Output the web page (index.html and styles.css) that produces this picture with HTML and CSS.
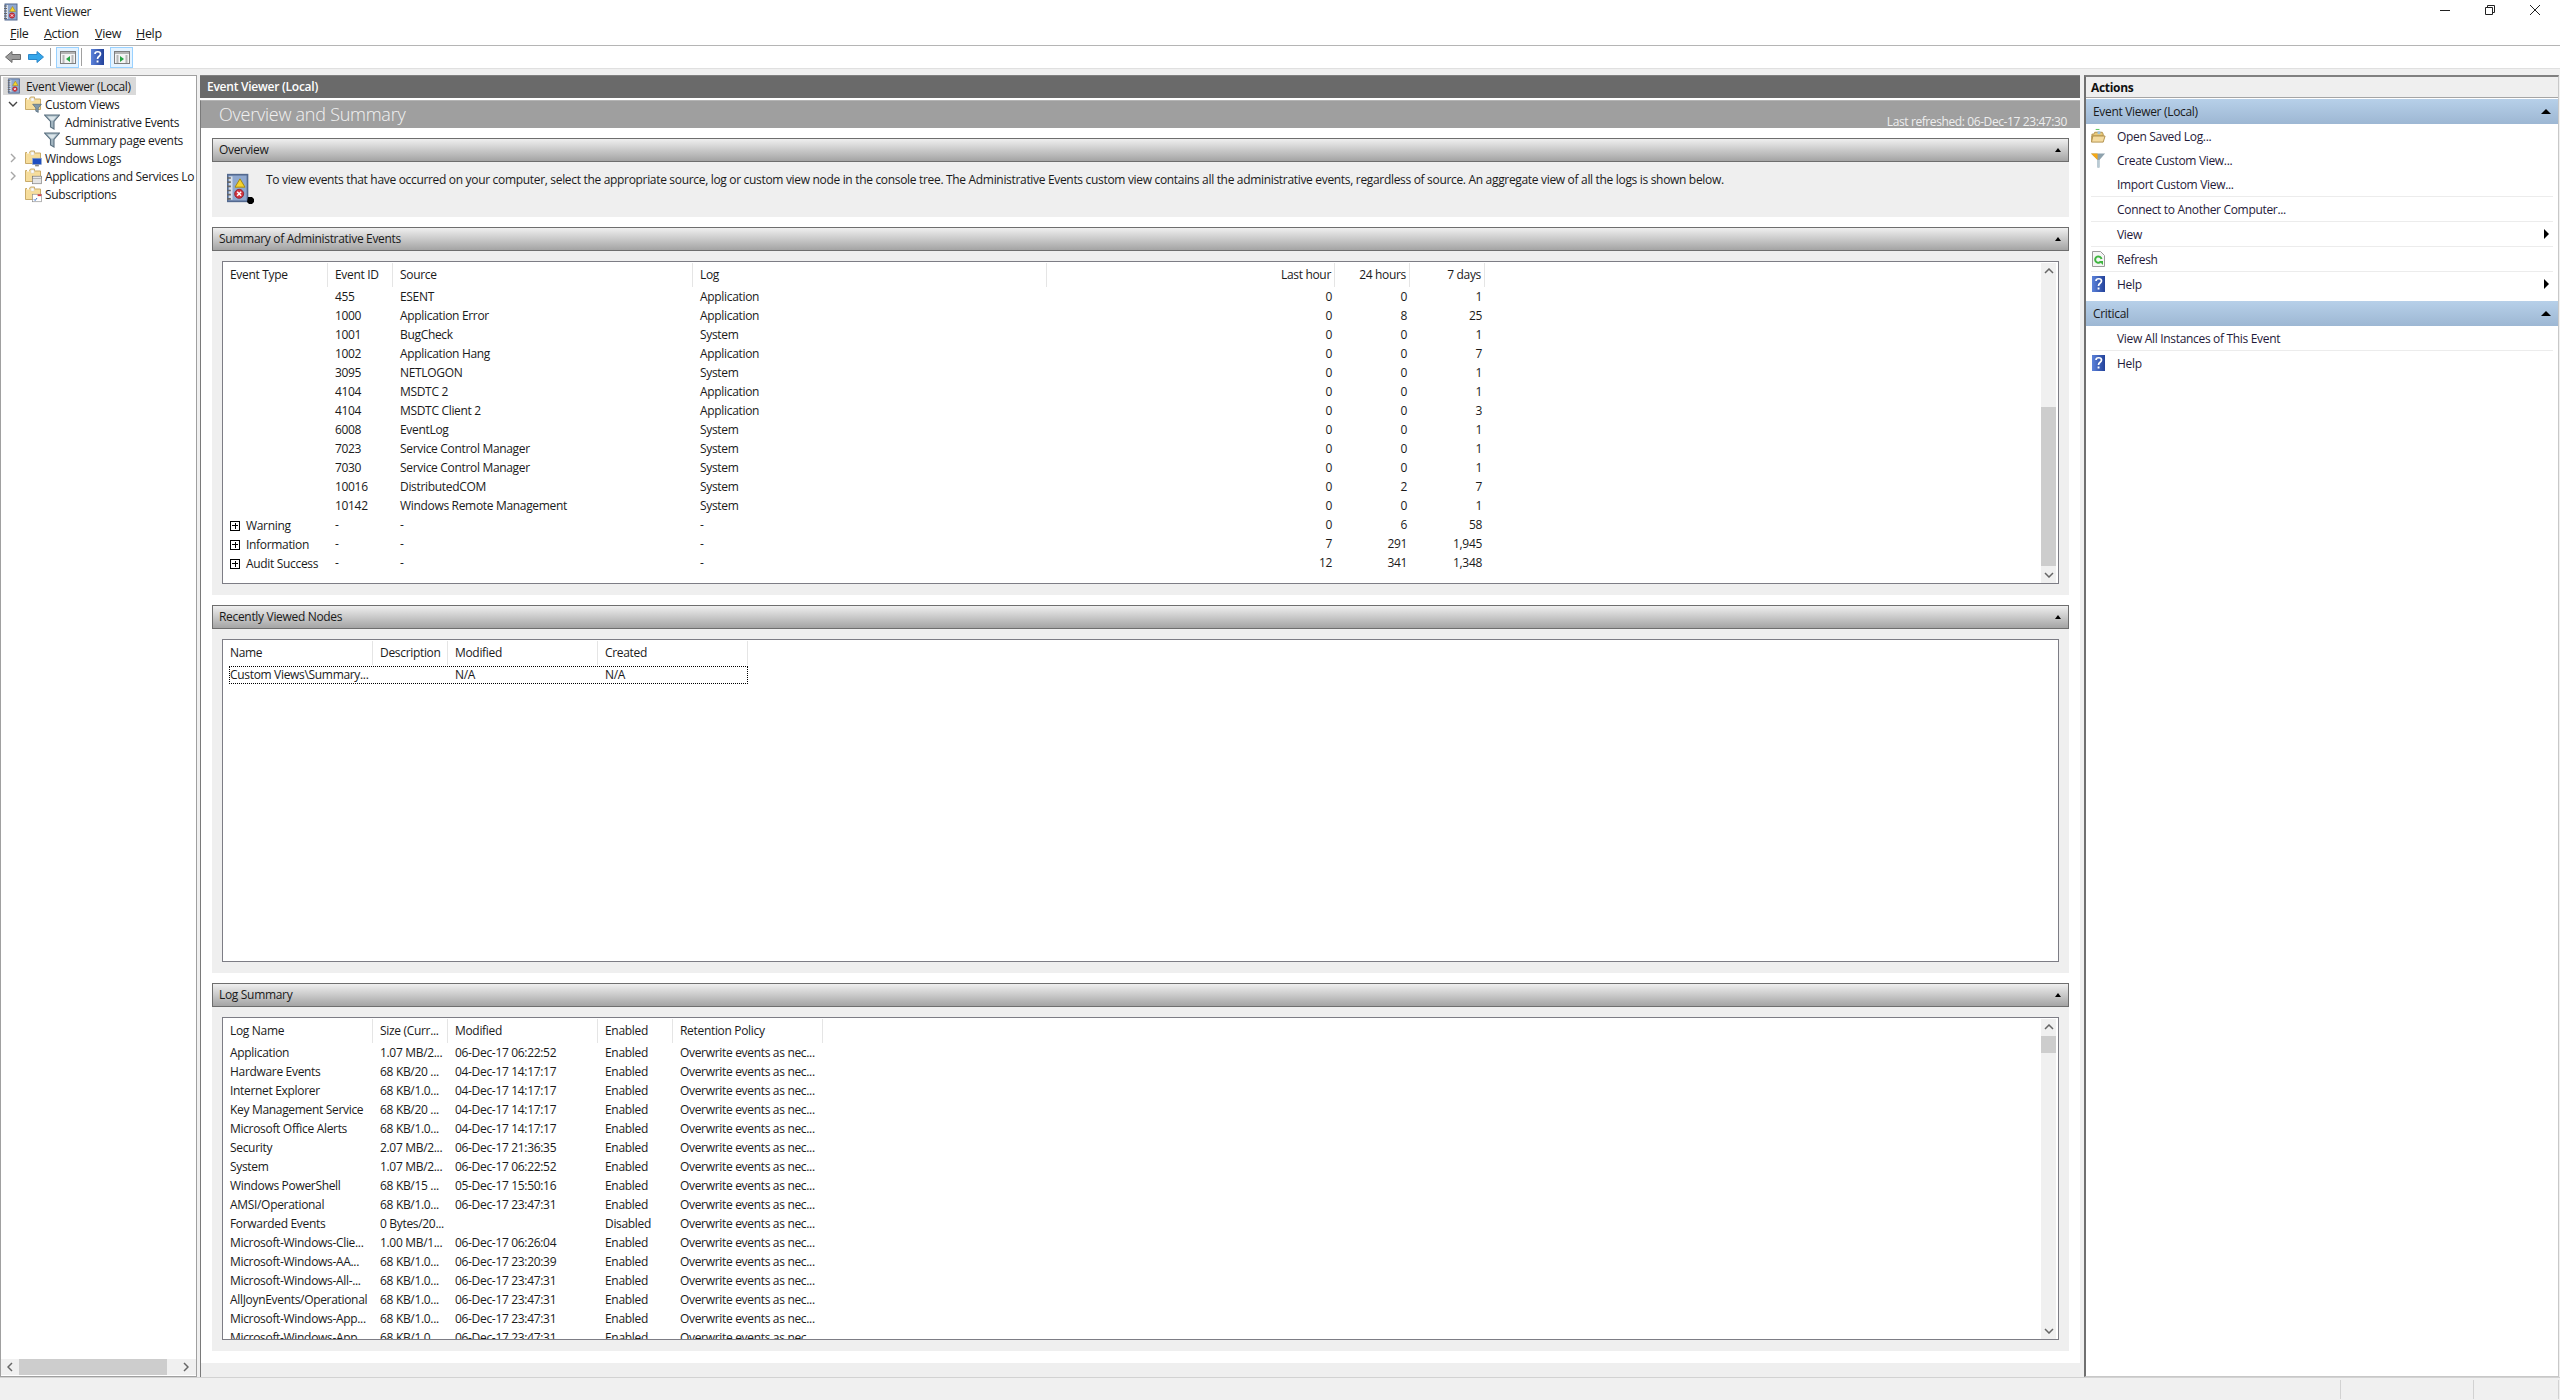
FILE: index.html
```html
<!DOCTYPE html>
<html lang="en">
<head>
    <meta charset="UTF-8">
    <title>Event Viewer</title>
    <link rel="stylesheet" href="styles.css">
</head>
<body>
    <svg class="defs" width="0" height="0">
        <defs>
            <linearGradient id="g-help" x1="0" x2="1" y1="0" y2="0">
                <stop offset="0" stop-color="#5c82da"/>
                <stop offset="1" stop-color="#23429a"/>
            </linearGradient>
            <symbol id="i-log" viewBox="0 0 16 18">
                <rect x="2" y="1" width="12" height="16" fill="#8fa8cf" stroke="#53698f"/>
                <rect x="3" y="2" width="2" height="14" fill="#d8dfe9"/>
                <path d="M1 3h3M1 5.500h3M1 8h3M1 10.500h3M1 13h3M1 15.500h3" stroke="#666" stroke-width="1"/>
                <path d="M9.500 3.500l3 5h-6z" fill="#f6d32d" stroke="#a58a16" stroke-width=".6"/>
                <circle cx="9" cy="12.500" r="2.700" fill="#d2333f" stroke="#8c1d27" stroke-width=".5"/>
                <path d="M7.800 11.300l2.400 2.400M10.200 11.300l-2.400 2.400" stroke="#fff" stroke-width=".9"/>
            </symbol>
            <symbol id="i-folder" viewBox="0 0 16 16">
                <path d="M.5 13.500V2.500h4l1-1.500h4v2h6v10.500z" fill="#f6dd9c" stroke="#c9ab6a"/>
                <rect x="2" y="2" width="2" height="1.500" fill="#fff"/>
                <rect x="6" y="2" width="3" height="3" fill="#fff" stroke="#cfcfcf" stroke-width=".5"/>
            </symbol>
            <symbol id="i-funnel" viewBox="0 0 16 16">
                <path d="M.5 1h15L10 7.500V15L6.500 13V7.500z" fill="#a3b6c1" stroke="#5b7080" stroke-width="1.100"/>
                <path d="M3.500 2.500h9L9 6.500H7z" fill="#dbe5ea"/>
            </symbol>
            <symbol id="i-help" viewBox="0 0 13 16">
                <rect width="13" height="16" fill="url(#g-help)"/>
                <path d="M4 5c0-3 5.500-3 5.500 0 0 2.500-3 2-3 5" fill="none" stroke="#fff" stroke-width="1.700"/>
                <rect x="5.600" y="11.500" width="1.900" height="2" fill="#fff"/>
            </symbol>
            <symbol id="i-panel" viewBox="0 0 16 13">
                <rect x=".5" y=".5" width="15" height="12" fill="#f4f4f4" stroke="#7d7d7d"/>
                <rect x="1" y="1" width="14" height="2" fill="#b4b4b4"/>
                <path d="M2.500 5h2M2.500 7h2M2.500 9h2M2.500 11h2M11.500 5h2M11.500 7h2M11.500 9h2M11.500 11h2" stroke="#7a7a7a"/>
            </symbol>
        </defs>
    </svg>

    <div class="titlebar">
        <svg class="title-icon"><use href="#i-log"/></svg>
        <span class="title-text">Event Viewer</span>
        <div class="win-controls">
            <svg class="win-btn" viewBox="0 0 10 10"><path d="M0 5.500h10" stroke="#222" fill="none"/></svg>
            <svg class="win-btn" viewBox="0 0 10 10"><path d="M.5 2.500h7v7h-7zM2.500 2.500v-2h7v7h-2" stroke="#222" fill="none"/></svg>
            <svg class="win-btn" viewBox="0 0 10 10"><path d="M0 0l10 10M10 0L0 10" stroke="#222" fill="none"/></svg>
        </div>
    </div>

    <div class="menubar">
        <span class="menu-item menu-file"><u>F</u>ile</span>
        <span class="menu-item menu-action"><u>A</u>ction</span>
        <span class="menu-item menu-view"><u>V</u>iew</span>
        <span class="menu-item"><u>H</u>elp</span>
    </div>

    <div class="toolbar">
        <svg class="tool-arrow" viewBox="0 0 16 12"><path d="M.5 6L7 .5v3h8.500v5H7v3z" fill="#9b9b9b" stroke="#6b6b6b"/></svg>
        <svg class="tool-arrow tool-next" viewBox="0 0 16 12"><path d="M15.500 6L9 .5v3H.5v5H9v3z" fill="#35a6ea" stroke="#2a86c9"/></svg>
        <span class="tool-sep"></span>
        <span class="tool-toggle">
            <svg class="tool-panel"><use href="#i-panel"/></svg>
            <svg class="tool-mark" viewBox="0 0 4 6"><path d="M4 0v6L0 3z" fill="#26a543"/></svg>
        </span>
        <span class="tool-sep tool-sep-second"></span>
        <svg class="tool-help"><use href="#i-help"/></svg>
        <span class="tool-toggle tool-toggle-last">
            <svg class="tool-panel"><use href="#i-panel"/></svg>
            <svg class="tool-mark" viewBox="0 0 4 6"><path d="M0 0v6l4-3z" fill="#26a543"/></svg>
        </span>
    </div>

    <div class="main">
        <div class="tree">
            <div class="tree-list">
                <div class="tree-row tree-root">
                    <svg class="tree-icon"><use href="#i-log"/></svg>
                    <span class="tree-selected">Event Viewer (Local)</span>
                </div>
                <div class="tree-row level-1">
                    <svg class="chevron" viewBox="0 0 10 6"><path d="M1 1l4 4 4-4" fill="none" stroke="#444" stroke-width="1.400"/></svg>
                    <span class="tree-icon-wrap">
                        <svg class="tree-icon"><use href="#i-folder"/></svg>
                        <svg class="tree-badge" viewBox="0 0 16 16"><path d="M1 2h14l-5 6v7l-4-2V8z" fill="#7f97a8" stroke="#4f6474"/></svg>
                    </span>
                    <span>Custom Views</span>
                </div>
                <div class="tree-row level-2">
                    <svg class="tree-icon"><use href="#i-funnel"/></svg>
                    <span>Administrative Events</span>
                </div>
                <div class="tree-row level-2">
                    <svg class="tree-icon"><use href="#i-funnel"/></svg>
                    <span>Summary page events</span>
                </div>
                <div class="tree-row level-1">
                    <svg class="chevron chevron-closed" viewBox="0 0 6 10"><path d="M1 1l4 4-4 4" fill="none" stroke="#a6a6a6" stroke-width="1.400"/></svg>
                    <span class="tree-icon-wrap">
                        <svg class="tree-icon"><use href="#i-folder"/></svg>
                        <svg class="tree-badge" viewBox="0 0 16 16"><rect x="1" y="2" width="14" height="10" fill="#1f4fc0" stroke="#8ea4c8"/><rect x="5" y="12" width="6" height="3" fill="#888"/></svg>
                    </span>
                    <span>Windows Logs</span>
                </div>
                <div class="tree-row level-1">
                    <svg class="chevron chevron-closed" viewBox="0 0 6 10"><path d="M1 1l4 4-4 4" fill="none" stroke="#a6a6a6" stroke-width="1.400"/></svg>
                    <span class="tree-icon-wrap">
                        <svg class="tree-icon"><use href="#i-folder"/></svg>
                        <svg class="tree-badge" viewBox="0 0 16 16"><rect x="1" y="2" width="14" height="12" fill="#e4e4e4" stroke="#777"/><rect x="1" y="2" width="14" height="3" fill="#fff" stroke="#777"/></svg>
                    </span>
                    <span>Applications and Services Lo</span>
                </div>
                <div class="tree-row level-1">
                    <span class="tree-icon-wrap">
                        <svg class="tree-icon"><use href="#i-folder"/></svg>
                        <svg class="tree-badge" viewBox="0 0 16 16"><rect x="1" y="2" width="14" height="12" fill="#fff" stroke="#888"/><rect x="9" y="2" width="6" height="3" fill="#d64545"/><path d="M3 10l2 2 3-4" stroke="#2d66c4" fill="none" stroke-width="1.400"/></svg>
                    </span>
                    <span>Subscriptions</span>
                </div>
            </div>
            <div class="hscroll">
                <svg class="scroll-arrow" viewBox="0 0 6 10"><path d="M5 1L1 5l4 4" fill="none" stroke="#666" stroke-width="1.500"/></svg>
                <span class="hscroll-thumb"></span>
                <svg class="scroll-arrow" viewBox="0 0 6 10"><path d="M1 1l4 4-4 4" fill="none" stroke="#666" stroke-width="1.500"/></svg>
            </div>
        </div>

        <div class="center">
            <div class="center-head">Event Viewer (Local)</div>
            <div class="center-body">
                <div class="summary-head">
                    <span class="summary-title">Overview and Summary</span>
                    <span class="refreshed">Last refreshed: 06-Dec-17 23:47:30</span>
                </div>

                <div class="section">
                    <div class="section-head"><span>Overview</span><i class="collapse"></i></div>
                    <div class="overview-body">
                        <svg class="overview-icon" viewBox="0 0 27 31">
                            <use href="#i-log" x="-3" width="27" height="30"/>
                            <path d="M21 24h4l2 2v3l-2 2h-3l-2-2z" fill="#000"/>
                        </svg>
                        <p class="overview-text">To view events that have occurred on your computer, select the appropriate source, log or custom view node in the console tree. The Administrative Events custom view contains all the administrative events, regardless of source. An aggregate view of all the logs is shown below.</p>
                    </div>
                </div>

                <div class="section">
                    <div class="section-head"><span>Summary of Administrative Events</span><i class="collapse"></i></div>
                    <div class="section-body">
                        <div class="listbox">
                            <div class="list">
                                <div class="row row-head cols-events">
                                    <span>Event Type</span><span>Event ID</span><span>Source</span><span>Log</span><span class="num">Last hour</span><span class="num">24 hours</span><span class="num">7 days</span>
                                </div>
                                <div class="row cols-events"><span></span><span>455</span><span>ESENT</span><span>Application</span><span class="num">0</span><span class="num">0</span><span class="num">1</span></div>
                                <div class="row cols-events"><span></span><span>1000</span><span>Application Error</span><span>Application</span><span class="num">0</span><span class="num">8</span><span class="num">25</span></div>
                                <div class="row cols-events"><span></span><span>1001</span><span>BugCheck</span><span>System</span><span class="num">0</span><span class="num">0</span><span class="num">1</span></div>
                                <div class="row cols-events"><span></span><span>1002</span><span>Application Hang</span><span>Application</span><span class="num">0</span><span class="num">0</span><span class="num">7</span></div>
                                <div class="row cols-events"><span></span><span>3095</span><span>NETLOGON</span><span>System</span><span class="num">0</span><span class="num">0</span><span class="num">1</span></div>
                                <div class="row cols-events"><span></span><span>4104</span><span>MSDTC 2</span><span>Application</span><span class="num">0</span><span class="num">0</span><span class="num">1</span></div>
                                <div class="row cols-events"><span></span><span>4104</span><span>MSDTC Client 2</span><span>Application</span><span class="num">0</span><span class="num">0</span><span class="num">3</span></div>
                                <div class="row cols-events"><span></span><span>6008</span><span>EventLog</span><span>System</span><span class="num">0</span><span class="num">0</span><span class="num">1</span></div>
                                <div class="row cols-events"><span></span><span>7023</span><span>Service Control Manager</span><span>System</span><span class="num">0</span><span class="num">0</span><span class="num">1</span></div>
                                <div class="row cols-events"><span></span><span>7030</span><span>Service Control Manager</span><span>System</span><span class="num">0</span><span class="num">0</span><span class="num">1</span></div>
                                <div class="row cols-events"><span></span><span>10016</span><span>DistributedCOM</span><span>System</span><span class="num">0</span><span class="num">2</span><span class="num">7</span></div>
                                <div class="row cols-events"><span></span><span>10142</span><span>Windows Remote Management</span><span>System</span><span class="num">0</span><span class="num">0</span><span class="num">1</span></div>
                                <div class="row cols-events"><span class="expander"><i class="plus"></i>Warning</span><span>-</span><span>-</span><span>-</span><span class="num">0</span><span class="num">6</span><span class="num">58</span></div>
                                <div class="row cols-events"><span class="expander"><i class="plus"></i>Information</span><span>-</span><span>-</span><span>-</span><span class="num">7</span><span class="num">291</span><span class="num">1,945</span></div>
                                <div class="row cols-events"><span class="expander"><i class="plus"></i>Audit Success</span><span>-</span><span>-</span><span>-</span><span class="num">12</span><span class="num">341</span><span class="num">1,348</span></div>
                            </div>
                            <div class="vscroll">
                                <svg class="scroll-arrow-v" viewBox="0 0 10 6"><path d="M1 5l4-4 4 4" fill="none" stroke="#666" stroke-width="1.500"/></svg>
                                <div class="vscroll-track track-events"><span class="vscroll-thumb"></span></div>
                                <svg class="scroll-arrow-v" viewBox="0 0 10 6"><path d="M1 1l4 4 4-4" fill="none" stroke="#666" stroke-width="1.500"/></svg>
                            </div>
                        </div>
                    </div>
                </div>

                <div class="section">
                    <div class="section-head"><span>Recently Viewed Nodes</span><i class="collapse"></i></div>
                    <div class="section-body">
                        <div class="listbox">
                            <div class="list">
                                <div class="row row-head cols-recent">
                                    <span>Name</span><span>Description</span><span>Modified</span><span>Created</span>
                                </div>
                                <div class="row row-focus">
                                    <span>Custom Views\Summary...</span><span></span><span>N/A</span><span>N/A</span>
                                </div>
                            </div>
                        </div>
                    </div>
                </div>

                <div class="section">
                    <div class="section-head"><span>Log Summary</span><i class="collapse"></i></div>
                    <div class="section-body">
                        <div class="listbox">
                            <div class="list">
                                <div class="row row-head cols-logs">
                                    <span>Log Name</span><span>Size (Curr...</span><span>Modified</span><span>Enabled</span><span>Retention Policy</span>
                                </div>
                                <div class="row cols-logs"><span>Application</span><span>1.07 MB/2...</span><span>06-Dec-17 06:22:52</span><span>Enabled</span><span>Overwrite events as nec...</span></div>
                                <div class="row cols-logs"><span>Hardware Events</span><span>68 KB/20 ...</span><span>04-Dec-17 14:17:17</span><span>Enabled</span><span>Overwrite events as nec...</span></div>
                                <div class="row cols-logs"><span>Internet Explorer</span><span>68 KB/1.0...</span><span>04-Dec-17 14:17:17</span><span>Enabled</span><span>Overwrite events as nec...</span></div>
                                <div class="row cols-logs"><span>Key Management Service</span><span>68 KB/20 ...</span><span>04-Dec-17 14:17:17</span><span>Enabled</span><span>Overwrite events as nec...</span></div>
                                <div class="row cols-logs"><span>Microsoft Office Alerts</span><span>68 KB/1.0...</span><span>04-Dec-17 14:17:17</span><span>Enabled</span><span>Overwrite events as nec...</span></div>
                                <div class="row cols-logs"><span>Security</span><span>2.07 MB/2...</span><span>06-Dec-17 21:36:35</span><span>Enabled</span><span>Overwrite events as nec...</span></div>
                                <div class="row cols-logs"><span>System</span><span>1.07 MB/2...</span><span>06-Dec-17 06:22:52</span><span>Enabled</span><span>Overwrite events as nec...</span></div>
                                <div class="row cols-logs"><span>Windows PowerShell</span><span>68 KB/15 ...</span><span>05-Dec-17 15:50:16</span><span>Enabled</span><span>Overwrite events as nec...</span></div>
                                <div class="row cols-logs"><span>AMSI/Operational</span><span>68 KB/1.0...</span><span>06-Dec-17 23:47:31</span><span>Enabled</span><span>Overwrite events as nec...</span></div>
                                <div class="row cols-logs"><span>Forwarded Events</span><span>0 Bytes/20...</span><span></span><span>Disabled</span><span>Overwrite events as nec...</span></div>
                                <div class="row cols-logs"><span>Microsoft-Windows-Clie...</span><span>1.00 MB/1...</span><span>06-Dec-17 06:26:04</span><span>Enabled</span><span>Overwrite events as nec...</span></div>
                                <div class="row cols-logs"><span>Microsoft-Windows-AA...</span><span>68 KB/1.0...</span><span>06-Dec-17 23:20:39</span><span>Enabled</span><span>Overwrite events as nec...</span></div>
                                <div class="row cols-logs"><span>Microsoft-Windows-All-...</span><span>68 KB/1.0...</span><span>06-Dec-17 23:47:31</span><span>Enabled</span><span>Overwrite events as nec...</span></div>
                                <div class="row cols-logs"><span>AllJoynEvents/Operational</span><span>68 KB/1.0...</span><span>06-Dec-17 23:47:31</span><span>Enabled</span><span>Overwrite events as nec...</span></div>
                                <div class="row cols-logs"><span>Microsoft-Windows-App...</span><span>68 KB/1.0...</span><span>06-Dec-17 23:47:31</span><span>Enabled</span><span>Overwrite events as nec...</span></div>
                                <div class="row cols-logs"><span>Microsoft-Windows-App...</span><span>68 KB/1.0...</span><span>06-Dec-17 23:47:31</span><span>Enabled</span><span>Overwrite events as nec...</span></div>
                            </div>
                            <div class="vscroll">
                                <svg class="scroll-arrow-v" viewBox="0 0 10 6"><path d="M1 5l4-4 4 4" fill="none" stroke="#666" stroke-width="1.500"/></svg>
                                <div class="vscroll-track"><span class="vscroll-thumb thumb-logs"></span></div>
                                <svg class="scroll-arrow-v" viewBox="0 0 10 6"><path d="M1 1l4 4 4-4" fill="none" stroke="#666" stroke-width="1.500"/></svg>
                            </div>
                        </div>
                    </div>
                </div>

                <div class="center-foot"></div>
            </div>
        </div>

        <div class="actions">
            <div class="actions-head">Actions</div>
            <div class="action-group"><span>Event Viewer (Local)</span><i class="group-caret"></i></div>
            <div class="action-list">
                <div class="action action-plain">
                    <svg class="action-icon action-icon-wide" viewBox="0 0 16 16"><path d="M5 1h4" stroke="#4fc04f"/><path d="M1 14V6h2l1-2h8l1 2v2H1z" fill="#e8c878" stroke="#b08f4a"/><path d="M7 3h3v3H7z" fill="#9fc4dc"/><path d="M0.500 14.500L2 8h13l-2 6.500z" fill="#f4dba0" stroke="#b08f4a"/></svg>
                    <span>Open Saved Log...</span>
                </div>
                <div class="action action-plain">
                    <svg class="action-icon action-icon-wide" viewBox="0 0 16 16"><path d="M0 1h15L9 8v8H7V8z" fill="#8ea2ad"/><path d="M0 1h7v7z" fill="#f6a916"/><rect x="6.500" y="8" width="2.500" height="8" fill="#b9cad3"/></svg>
                    <span>Create Custom View...</span>
                </div>
                <div class="action"><span>Import Custom View...</span></div>
                <div class="action"><span>Connect to Another Computer...</span></div>
                <div class="action"><span>View</span><i class="sub-caret"></i></div>
                <div class="action">
                    <svg class="action-icon" viewBox="0 0 13 16"><path d="M.5.500h8l4 4v11H.5z" fill="#f5f5f5" stroke="#9a9a9a"/><path d="M9.500 8a3.200 3.200 0 1 0-1 3" fill="none" stroke="#3fb53f" stroke-width="2"/><path d="M7 10h4v4z" fill="#3fb53f"/></svg>
                    <span>Refresh</span>
                </div>
                <div class="action action-plain">
                    <svg class="action-icon"><use href="#i-help"/></svg>
                    <span>Help</span><i class="sub-caret"></i>
                </div>
            </div>
            <div class="action-group"><span>Critical</span><i class="group-caret"></i></div>
            <div class="action-list">
                <div class="action"><span>View All Instances of This Event</span></div>
                <div class="action action-plain">
                    <svg class="action-icon"><use href="#i-help"/></svg>
                    <span>Help</span>
                </div>
            </div>
        </div>
    </div>

    <div class="statusbar">
        <span class="status-cell status-wide"></span>
        <span class="status-cell status-mid"></span>
        <span class="status-cell status-end"></span>
    </div>
</body>
</html>
```

FILE: styles.css
```css
* {
    box-sizing: border-box;
}
html, body {
    margin: 0;
    padding: 0;
}
body {
    width: 2560px;
    height: 1400px;
    overflow: hidden;
    display: flex;
    flex-direction: column;
    background-color: #f0f0f0;
    color: #1a1a1a;
    font-family: "Open Sans", "Liberation Sans", sans-serif;
    font-size: 12px;
    letter-spacing: -0.32px;
}
.defs {
    position: absolute;
}

/* window chrome */
.titlebar {
    height: 23px;
    display: flex;
    align-items: center;
    background-color: #fff;
    padding-left: 3px;
}
.title-icon {
    width: 16px;
    height: 18px;
}
.title-text {
    margin-left: 4px;
}
.win-controls {
    margin-left: auto;
    align-self: flex-start;
    display: flex;
    padding: 5px 20px 0 0;
    gap: 35px;
}
.win-btn {
    width: 10px;
    height: 10px;
}
.menubar {
    height: 23px;
    display: flex;
    align-items: center;
    background-color: #fff;
    border-bottom: 1px solid #b5b5b5;
    padding: 0 0 1px 10px;
    font-size: 12.5px;
}
.menu-item {
    width: 41px;
}
.menu-file {
    width: 34px;
}
.menu-action {
    width: 51px;
}
.toolbar {
    height: 23px;
    display: flex;
    align-items: center;
    background-color: #fff;
    border-bottom: 1px solid #e0e0e0;
    padding-left: 5px;
}
.tool-arrow {
    width: 16px;
    height: 12px;
}
.tool-next {
    margin-left: 7px;
}
.tool-sep {
    width: 1px;
    height: 18px;
    background-color: #a0a0a0;
    margin: 0 5px 0 6px;
}
.tool-sep-second {
    margin: 0 9px 0 2px;
}
.tool-toggle {
    width: 23px;
    height: 21px;
    display: flex;
    align-items: center;
    justify-content: center;
    position: relative;
    background-color: #e5f3ff;
    border: 1px solid #99d1ff;
}
.tool-toggle-last {
    margin-left: 6px;
}
.tool-panel {
    width: 16px;
    height: 13px;
}
.tool-mark {
    position: absolute;
    left: 9px;
    top: 8px;
    width: 4px;
    height: 6px;
}
.tool-help {
    width: 13px;
    height: 16px;
}

.main {
    flex: 1;
    display: flex;
    padding-top: 6px;
    min-height: 0;
}

/* console tree */
.tree {
    width: 197px;
    display: flex;
    flex-direction: column;
    background-color: #fff;
    border: 1px solid #a0a0a0;
    height: 1302px;
}
.tree-list {
    flex: 1;
    padding: 1px 0 0 2px;
    overflow: hidden;
}
.tree-row {
    height: 18px;
    display: flex;
    align-items: center;
    white-space: nowrap;
}
.tree-root {
    padding-left: 3px;
    width: 133px;
    background-color: #d9d9d9;
}
.tree-selected {
    padding-left: 4px;
}
.level-1 {
    padding-left: 22px;
    position: relative;
}
.level-2 {
    padding-left: 41px;
}
.tree-icon {
    width: 16px;
    height: 16px;
    flex: none;
}
.level-1 .tree-icon-wrap {
    margin-right: 4px;
}
.level-2 .tree-icon {
    margin-right: 5px;
}
.tree-icon-wrap {
    position: relative;
    width: 16px;
    height: 16px;
    flex: none;
}
.tree-badge {
    position: absolute;
    right: -1px;
    bottom: -1px;
    width: 10px;
    height: 10px;
}
.chevron {
    position: absolute;
    left: 5px;
    top: 6px;
    width: 10px;
    height: 6px;
}
.chevron-closed {
    left: 7px;
    top: 4px;
    width: 6px;
    height: 10px;
}
.hscroll {
    height: 16px;
    display: flex;
    align-items: center;
    background-color: #f0f0f0;
    margin-bottom: 1px;
}
.hscroll-thumb {
    width: 148px;
    height: 16px;
    margin: 0 16px 0 6px;
    background-color: #cdcdcd;
}
.scroll-arrow {
    margin-left: 6px;
    width: 6px;
    height: 10px;
}
.hscroll-thumb + .scroll-arrow {
    margin-left: 0;
}

/* middle pane */
.center {
    width: 1880px;
    margin-left: 3px;
    height: 1302px;
    display: flex;
    flex-direction: column;
    background-color: #fff;
}
.center-head {
    height: 23px;
    line-height: 22px;
    padding-left: 7px;
    border-top: 1px solid #808080;
    background-color: #6a6a6a;
    color: #fff;
    font-weight: 600;
    letter-spacing: -0.25px;
    flex: none;
}
.center-body {
    flex: 1;
    margin-top: 2px;
    border-left: 1px solid #7a7a7a;
    border-top: 1px solid #b4b4b4;
    background-color: #fff;
    display: flex;
    flex-direction: column;
    min-height: 0;
}
.summary-head {
    height: 27px;
    display: flex;
    justify-content: space-between;
    background-color: #9f9f9f;
    padding: 0 13px 0 18px;
    flex: none;
}
.summary-title {
    font-size: 18px;
    line-height: 27px;
    font-weight: 300;
    letter-spacing: -0.25px;
    color: #f2f2f2;
}
.refreshed {
    line-height: 15px;
    margin-top: 13px;
    color: #eee;
    letter-spacing: -0.4px;
}
.section {
    margin: 10px 11px 0 11px;
    display: flex;
    flex-direction: column;
    background-color: #efefef;
    flex: none;
}
.section-head {
    height: 24px;
    display: flex;
    align-items: center;
    justify-content: space-between;
    padding: 0 7px 2px 6px;
    background: linear-gradient(to bottom, #efefef, #a4a4a4);
    border: 1px solid #6e6e6e;
}
.collapse {
    width: 0;
    height: 0;
    margin-top: 2px;
    border-left: 3px solid transparent;
    border-right: 3px solid transparent;
    border-bottom: 4px solid #000;
}
.overview-body {
    height: 55px;
    display: flex;
    padding: 10px 0 0 15px;
}
.overview-icon {
    width: 27px;
    height: 31px;
    flex: none;
    margin-top: 1px;
}
.overview-text {
    margin: 0 0 0 12px;
    line-height: 15px;
}
.section-body {
    padding: 10px 10px 11px 10px;
}
.center-foot {
    flex: 1;
    margin-top: 12px;
    background-color: #efefef;
}

/* list views */
.listbox {
    height: 323px;
    display: flex;
    background-color: #fff;
    border: 1px solid #7d7d85;
    overflow: hidden;
    padding-top: 1px;
}
.list {
    flex: 1;
    min-width: 0;
    overflow: hidden;
}
.row {
    display: grid;
    height: 19px;
    line-height: 18px;
    white-space: nowrap;
}
.row > span {
    padding-left: 7px;
}
.row-head {
    height: 24px;
    line-height: 24px;
    margin-bottom: 1px;
}
.row-head > span {
    border-right: 1px solid #e5e5e5;
}
.cols-events {
    grid-template-columns: 105px 65px 300px 354px 288px 75px 75px;
}
.cols-events > .num {
    text-align: right;
    padding-right: 3px;
}
.cols-recent {
    grid-template-columns: 150px 75px 150px 150px;
}
.cols-logs {
    grid-template-columns: 150px 75px 150px 75px 150px;
}
.row-focus {
    width: 519px;
    margin-left: 6px;
    height: 18px;
    line-height: 17px;
    grid-template-columns: 144px 75px 150px 150px;
    outline: 1px dotted #000;
    outline-offset: -1px;
}
.row-focus > span:first-child {
    padding-left: 1px;
}
.expander {
    display: flex;
    align-items: center;
}
.plus {
    width: 10px;
    height: 10px;
    margin-right: 6px;
    border: 1px solid #000;
    background:
        linear-gradient(#000, #000) center / 6px 1px no-repeat,
        linear-gradient(#000, #000) center / 1px 6px no-repeat;
}
.vscroll {
    width: 15px;
    margin-right: 2px;
    display: flex;
    flex-direction: column;
    background-color: #f0f0f0;
    flex: none;
}
.scroll-arrow-v {
    width: 10px;
    height: 6px;
    margin: 5px auto;
    flex: none;
}
.vscroll-track {
    flex: 1;
}
.vscroll-thumb {
    display: block;
    width: 15px;
    height: 17px;
    background-color: #cdcdcd;
}
.thumb-logs {
    margin-top: 1px;
}
.track-events {
    padding-top: 128px;
}
.track-events .vscroll-thumb {
    height: 159px;
}

/* actions pane */
.actions {
    width: 475px;
    margin-left: 4px;
    height: 1302px;
    display: flex;
    flex-direction: column;
    background-color: #fff;
    border-left: 2px solid #707070;
    border-top: 2px solid #808080;
    border-right: 1px solid #c8c8c8;
    border-bottom: 1px solid #c8c8c8;
}
.actions-head {
    height: 21px;
    line-height: 21px;
    padding-left: 5px;
    margin-bottom: 1px;
    background-color: #efefef;
    border-bottom: 1px solid #a5a5a5;
    font-weight: 700;
    color: #111;
}
.action-group {
    height: 25px;
    display: flex;
    align-items: center;
    justify-content: space-between;
    padding: 0 7px;
    background: linear-gradient(to bottom, #b7d0e9, #9db7d3);
}
.group-caret {
    width: 0;
    height: 0;
    border-left: 5px solid transparent;
    border-right: 5px solid transparent;
    border-bottom: 5px solid #000;
}
.action-list {
    padding: 0 5px;
    margin-bottom: 5px;
}
.action {
    height: 25px;
    display: flex;
    align-items: center;
    padding-left: 26px;
    position: relative;
    border-bottom: 1px solid #ececec;
    color: #1f1a3a;
}
.action-plain {
    height: 24px;
    border-bottom: 0;
}
.action-icon {
    position: absolute;
    left: 1px;
    top: 4px;
    width: 13px;
    height: 16px;
}
.action-icon-wide {
    left: 0;
    width: 15px;
}
.sub-caret {
    position: absolute;
    right: 4px;
    top: 7px;
    width: 0;
    height: 0;
    border-top: 5px solid transparent;
    border-bottom: 5px solid transparent;
    border-left: 5px solid #000;
}

.statusbar {
    height: 23px;
    display: flex;
    justify-content: flex-end;
    background-color: #f0f0f0;
    border-top: 1px solid #d2d2d2;
    padding: 2px 1px 1px 0;
}
.status-cell {
    border-left: 1px solid #d2d2d2;
}
.status-wide {
    width: 133px;
}
.status-mid {
    width: 85px;
}
.status-end {
    width: 0;
}
```
